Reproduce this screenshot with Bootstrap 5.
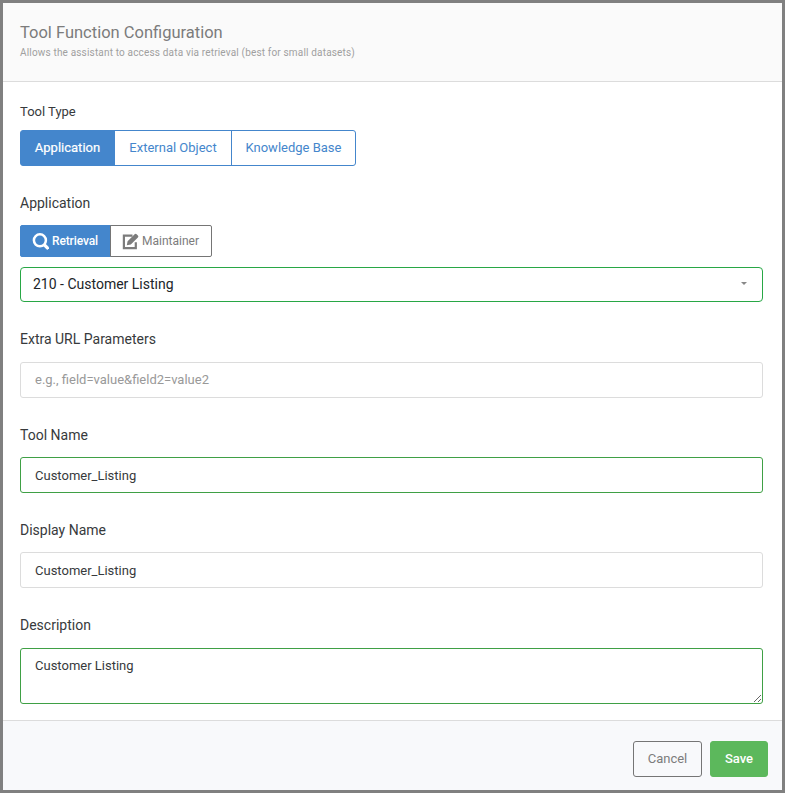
<!DOCTYPE html>
<html lang="en">
<head>
<meta charset="utf-8">
<meta name="viewport" content="width=device-width, initial-scale=1">
<title>Tool Function Configuration</title>
<link href="https://cdn.jsdelivr.net/npm/bootstrap@5.3.0/dist/css/bootstrap.min.css" rel="stylesheet">
<style>
body { font-family: Roboto, "Liberation Sans", sans-serif; font-size: 14px; line-height: 20px; color: #373a3c; }
.dialog-frame { height: 793px; border: 3px solid #808080; background: #fff; overflow: hidden; }
.dialog-head { height: 79px; padding: 19px 17px 0; background: #fafafa; border-bottom: 1px solid #dcdcdc; }
.dialog-head h1 { font-size: 16.5px; line-height: 22px; font-weight: 400; color: #7c7c7c; margin: 0; }
.dialog-head p { font-size: 10px; line-height: 14px; letter-spacing: .17px; color: #a0a0a0; margin: 2px 0 0; }
.dialog-main { height: 638px; padding: 20px 19px 0 17px; }
.dialog-foot { height: 70px; padding: 20px 14px 0 0; background: #f8f9fb; border-top: 1px solid #dcdcdc; }
.form-label { display: block; margin: 0; height: 20px; font-size: 14px; }
.label-sm { font-size: 13px; height: 28px; }
.field-block { margin-bottom: 27px; }
.btn { --bs-btn-font-size: 13px; --bs-btn-line-height: 20px; --bs-btn-padding-x: 0; --bs-btn-padding-y: 7px; --bs-btn-border-radius: 3px; height: 36px; white-space: nowrap; }
.btn-group > .btn { flex: none; }
.btn-outline-primary { --bs-btn-color: #4486cc; --bs-btn-border-color: #4486cc; --bs-btn-active-bg: #4486cc; --bs-btn-active-border-color: #4486cc; }
.type-app { width: 95px; -webkit-text-stroke: .2px #fff; }
.type-ext { width: 118px; }
.type-kb { width: 125px; }
.btn-mode { --bs-btn-font-size: 12px; --bs-btn-line-height: 16px; --bs-btn-border-radius: 2px; height: 32px; gap: 3px; padding-left: 11px; }
.btn-mode.active { font-weight: 500; letter-spacing: -.12px; }
.mode-ret { width: 91px; }
.mode-main { width: 102px; }
.mode-group { margin: 12px 0 10px; }
.mode-group > .mode-main { z-index: 2; }
.btn-outline-secondary { --bs-btn-color: #7c7c7c; --bs-btn-border-color: #757575; }
.btn-save { --bs-btn-bg: #5cb85c; --bs-btn-border-color: #5cb85c; --bs-btn-color: #fff; font-weight: 500; width: 58px; }
.btn-cancel { width: 69px; }
.form-control { height: 36px; margin-top: 12px; padding: 7px 14px; font-size: 13px; line-height: 20px; border: 1px solid #dcdcdc; border-radius: 3px; color: #373a3c; }
.form-control::placeholder { color: #999; }
.form-control.ok { border-color: #3fa045; }
.form-control.input-params { margin-top: 13px; padding-top: 6px; padding-bottom: 8px; }
textarea.form-control { height: 56px; min-height: 56px; margin-top: 13px; overflow: hidden; }
.picker { height: 35px; padding: 0 15px 2px 12px; border: 1px solid #28a745; border-radius: 4px; color: #212529; }
.caret { border: 3.5px solid transparent; border-top: 3.5px solid #888; border-bottom: 0; }
</style>
<script src="https://cdn.jsdelivr.net/npm/bootstrap@5.3.0/dist/js/bootstrap.bundle.min.js"></script>
</head>
<body>
<div class="dialog-frame d-flex flex-column">
  <header class="dialog-head">
    <h1>Tool Function Configuration</h1>
    <p>Allows the assistant to access data via retrieval (best for small datasets)</p>
  </header>
  <main class="dialog-main">
    <div class="field-block">
      <span class="form-label label-sm">Tool Type</span>
      <div class="btn-group d-flex justify-content-start">
        <button type="button" class="btn btn-outline-primary type-app active">Application</button>
        <button type="button" class="btn btn-outline-primary type-ext">External Object</button>
        <button type="button" class="btn btn-outline-primary type-kb">Knowledge Base</button>
      </div>
    </div>
    <div class="field-block">
      <span class="form-label">Application</span>
      <div class="btn-group d-flex justify-content-start mode-group">
        <button type="button" class="btn btn-mode btn-outline-primary mode-ret active d-flex align-items-center">
          <svg width="17" height="17" viewBox="0 0 17 17" fill="none" stroke="currentColor"><circle cx="7.9" cy="7.3" r="6" stroke-width="2.5"/><path d="M12 11.5l4.4 4.3" stroke-width="3.2"/></svg>Retrieval
        </button>
        <button type="button" class="btn btn-mode btn-outline-secondary mode-main d-flex align-items-center">
          <svg width="17" height="17" viewBox="0 0 17 17"><path d="M10.5 2.6H1.9v12.5h11.9V9.2" fill="none" stroke="currentColor" stroke-width="2.2"/><path d="M4.8 12.3l.8-4 7-7.1q1-1 2 0l1.3 1.3q1 1 0 2l-7.1 7z" fill="currentColor"/></svg>Maintainer
        </button>
      </div>
      <div class="picker d-flex align-items-center justify-content-between" role="combobox" aria-label="Application">
        <span>210 - Customer Listing</span><span class="caret"></span>
      </div>
    </div>
    <div class="field-block">
      <label class="form-label" for="params">Extra URL Parameters</label>
      <input id="params" class="form-control input-params" placeholder="e.g., field=value&amp;field2=value2">
    </div>
    <div class="field-block">
      <label class="form-label" for="tool">Tool Name</label>
      <input id="tool" class="form-control ok" value="Customer_Listing">
    </div>
    <div class="field-block">
      <label class="form-label" for="display">Display Name</label>
      <input id="display" class="form-control" value="Customer_Listing">
    </div>
    <div>
      <label class="form-label" for="desc">Description</label>
      <textarea id="desc" class="form-control ok">Customer Listing</textarea>
    </div>
  </main>
  <footer class="dialog-foot d-flex justify-content-end gap-2">
    <button type="button" class="btn btn-outline-secondary btn-cancel">Cancel</button>
    <button type="button" class="btn btn-save">Save</button>
  </footer>
</div>
</body>
</html>
